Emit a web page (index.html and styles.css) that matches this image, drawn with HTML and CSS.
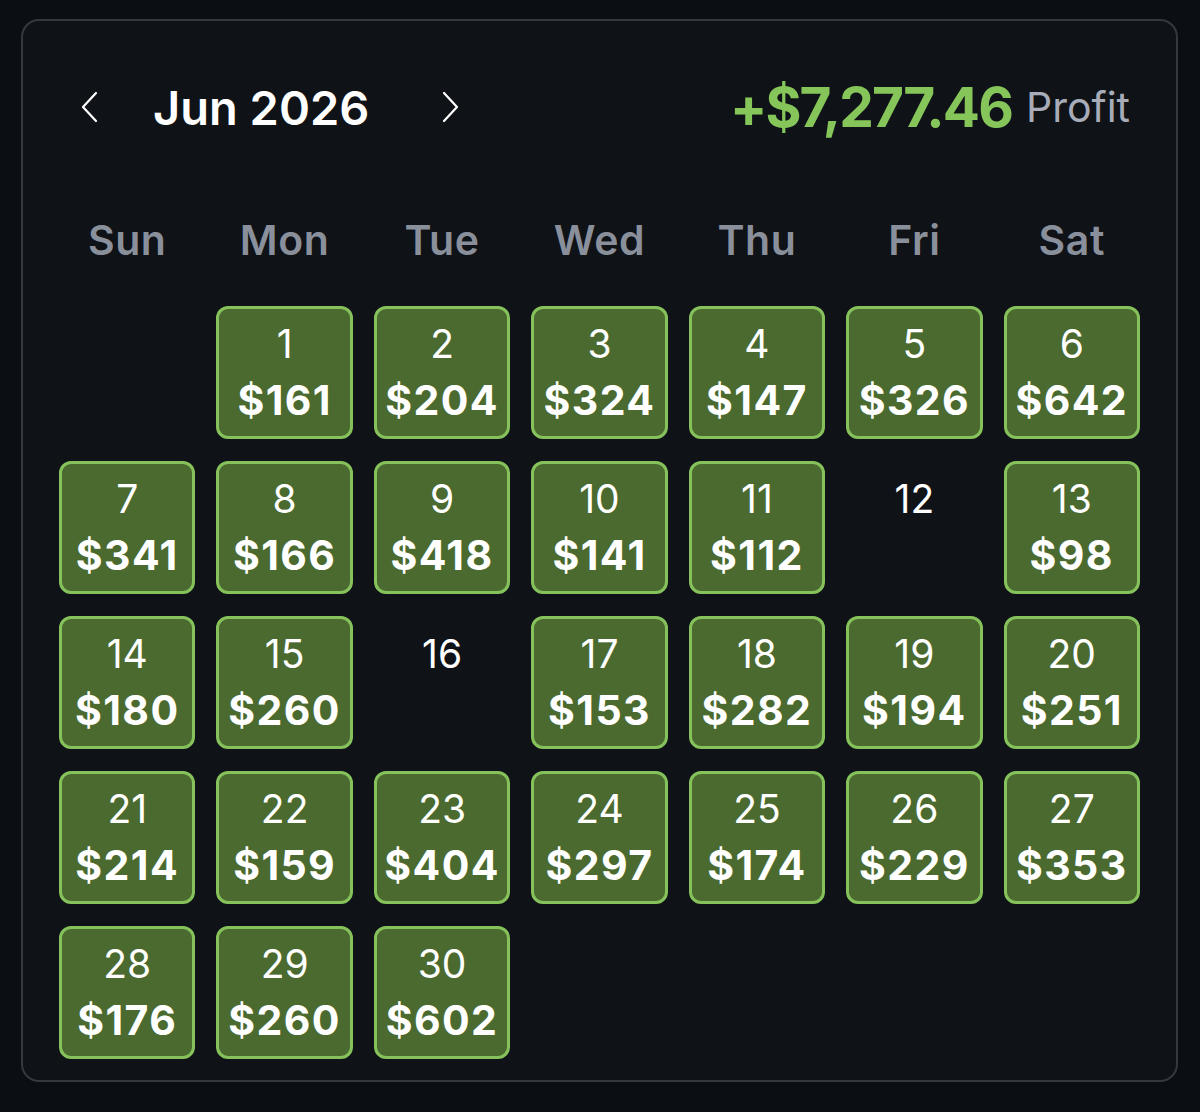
FILE: index.html
```html
<!DOCTYPE html>
<html lang="en">
<head>
<meta charset="UTF-8">
<title>Profit calendar</title>
<link rel="stylesheet" href="styles.css">
</head>
<body>
<div class="calendar">
	<div class="calendar-head">
		<div class="month-nav">
			<span class="nav-btn">
				<svg width="18" height="32" viewBox="0 0 18 32"><path d="M16 2 L3 16 L16 30" fill="none" stroke="#fff" stroke-width="2.2" stroke-linecap="round" stroke-linejoin="round"/></svg>
			</span>
			<span class="month">Jun 2026</span>
			<span class="nav-btn">
				<svg width="18" height="32" viewBox="0 0 18 32"><path d="M2 2 L15 16 L2 30" fill="none" stroke="#fff" stroke-width="2.2" stroke-linecap="round" stroke-linejoin="round"/></svg>
			</span>
		</div>
		<div class="total">
			<span class="total-value">+$7,277.46</span>
			<span class="total-label">Profit</span>
		</div>
	</div>

	<ul class="weekdays">
		<li>Sun</li>
		<li>Mon</li>
		<li>Tue</li>
		<li>Wed</li>
		<li>Thu</li>
		<li>Fri</li>
		<li>Sat</li>
	</ul>

	<div class="days">
		<div class="day empty"></div>
		<div class="day win"><span class="num">1</span><span class="amt">$161</span></div>
		<div class="day win"><span class="num">2</span><span class="amt">$204</span></div>
		<div class="day win"><span class="num">3</span><span class="amt">$324</span></div>
		<div class="day win"><span class="num">4</span><span class="amt">$147</span></div>
		<div class="day win"><span class="num">5</span><span class="amt">$326</span></div>
		<div class="day win"><span class="num">6</span><span class="amt">$642</span></div>

		<div class="day win"><span class="num">7</span><span class="amt">$341</span></div>
		<div class="day win"><span class="num">8</span><span class="amt">$166</span></div>
		<div class="day win"><span class="num">9</span><span class="amt">$418</span></div>
		<div class="day win"><span class="num">10</span><span class="amt">$141</span></div>
		<div class="day win"><span class="num">11</span><span class="amt">$112</span></div>
		<div class="day"><span class="num">12</span></div>
		<div class="day win"><span class="num">13</span><span class="amt">$98</span></div>

		<div class="day win"><span class="num">14</span><span class="amt">$180</span></div>
		<div class="day win"><span class="num">15</span><span class="amt">$260</span></div>
		<div class="day"><span class="num">16</span></div>
		<div class="day win"><span class="num">17</span><span class="amt">$153</span></div>
		<div class="day win"><span class="num">18</span><span class="amt">$282</span></div>
		<div class="day win"><span class="num">19</span><span class="amt">$194</span></div>
		<div class="day win"><span class="num">20</span><span class="amt">$251</span></div>

		<div class="day win"><span class="num">21</span><span class="amt">$214</span></div>
		<div class="day win"><span class="num">22</span><span class="amt">$159</span></div>
		<div class="day win"><span class="num">23</span><span class="amt">$404</span></div>
		<div class="day win"><span class="num">24</span><span class="amt">$297</span></div>
		<div class="day win"><span class="num">25</span><span class="amt">$174</span></div>
		<div class="day win"><span class="num">26</span><span class="amt">$229</span></div>
		<div class="day win"><span class="num">27</span><span class="amt">$353</span></div>

		<div class="day win"><span class="num">28</span><span class="amt">$176</span></div>
		<div class="day win"><span class="num">29</span><span class="amt">$260</span></div>
		<div class="day win"><span class="num">30</span><span class="amt">$602</span></div>
	</div>
</div>
</body>
</html>
```

FILE: styles.css
```css
html, body {
margin:0;
background:#0b0e12;
}
body {
padding:19px 22px 0 21px;
font-family:Inter, "Liberation Sans", sans-serif;
color:#fff;
}
.calendar {
height:1063px;
box-sizing:border-box;
background:#0f1216;
border:2px solid #35383d;
border-radius:18px;
padding:56px 36px 21px 36px;
}
.calendar-head {
height:60px;
display:flex;
align-items:center;
justify-content:space-between;
padding:0 10px 0 21px;
}
.month-nav {
display:flex;
align-items:center;
}
.nav-btn {
display:flex;
width:18px;
height:32px;
cursor:pointer;
}
.month {
width:289px;
padding-left:55px;
font-size:47px;
font-weight:600;
}
.total {
display:flex;
align-items:center;
gap:14px;
}
.total-value {
font-size:55px;
font-weight:700;
color:#85c55a;
letter-spacing:-1.9px;
}
.total-label {
font-size:41px;
color:#a8acb9;
}
.weekdays {
list-style:none;
margin:78px 0 41px 0;
padding:0;
display:grid;
grid-template-columns:repeat(7, 1fr);
column-gap:21px;
}
.weekdays li {
height:50px;
line-height:50px;
text-align:center;
font-size:41px;
font-weight:600;
letter-spacing:0.6px;
color:#8a909b;
}
.days {
display:grid;
grid-template-columns:repeat(7, 1fr);
grid-auto-rows:133px;
column-gap:21px;
row-gap:22px;
}
.day {
display:flex;
flex-direction:column;
align-items:center;
box-sizing:border-box;
padding-top:11px;
border:3px solid transparent;
border-radius:12px;
}
.day.win {
background:#4b6a2f;
border-color:#86c25b;
}
.num {
height:48px;
line-height:48px;
font-size:39px;
font-weight:400;
}
.amt {
margin-top:8px;
height:48px;
line-height:48px;
font-size:41px;
font-weight:700;
letter-spacing:1.4px;
}
```
